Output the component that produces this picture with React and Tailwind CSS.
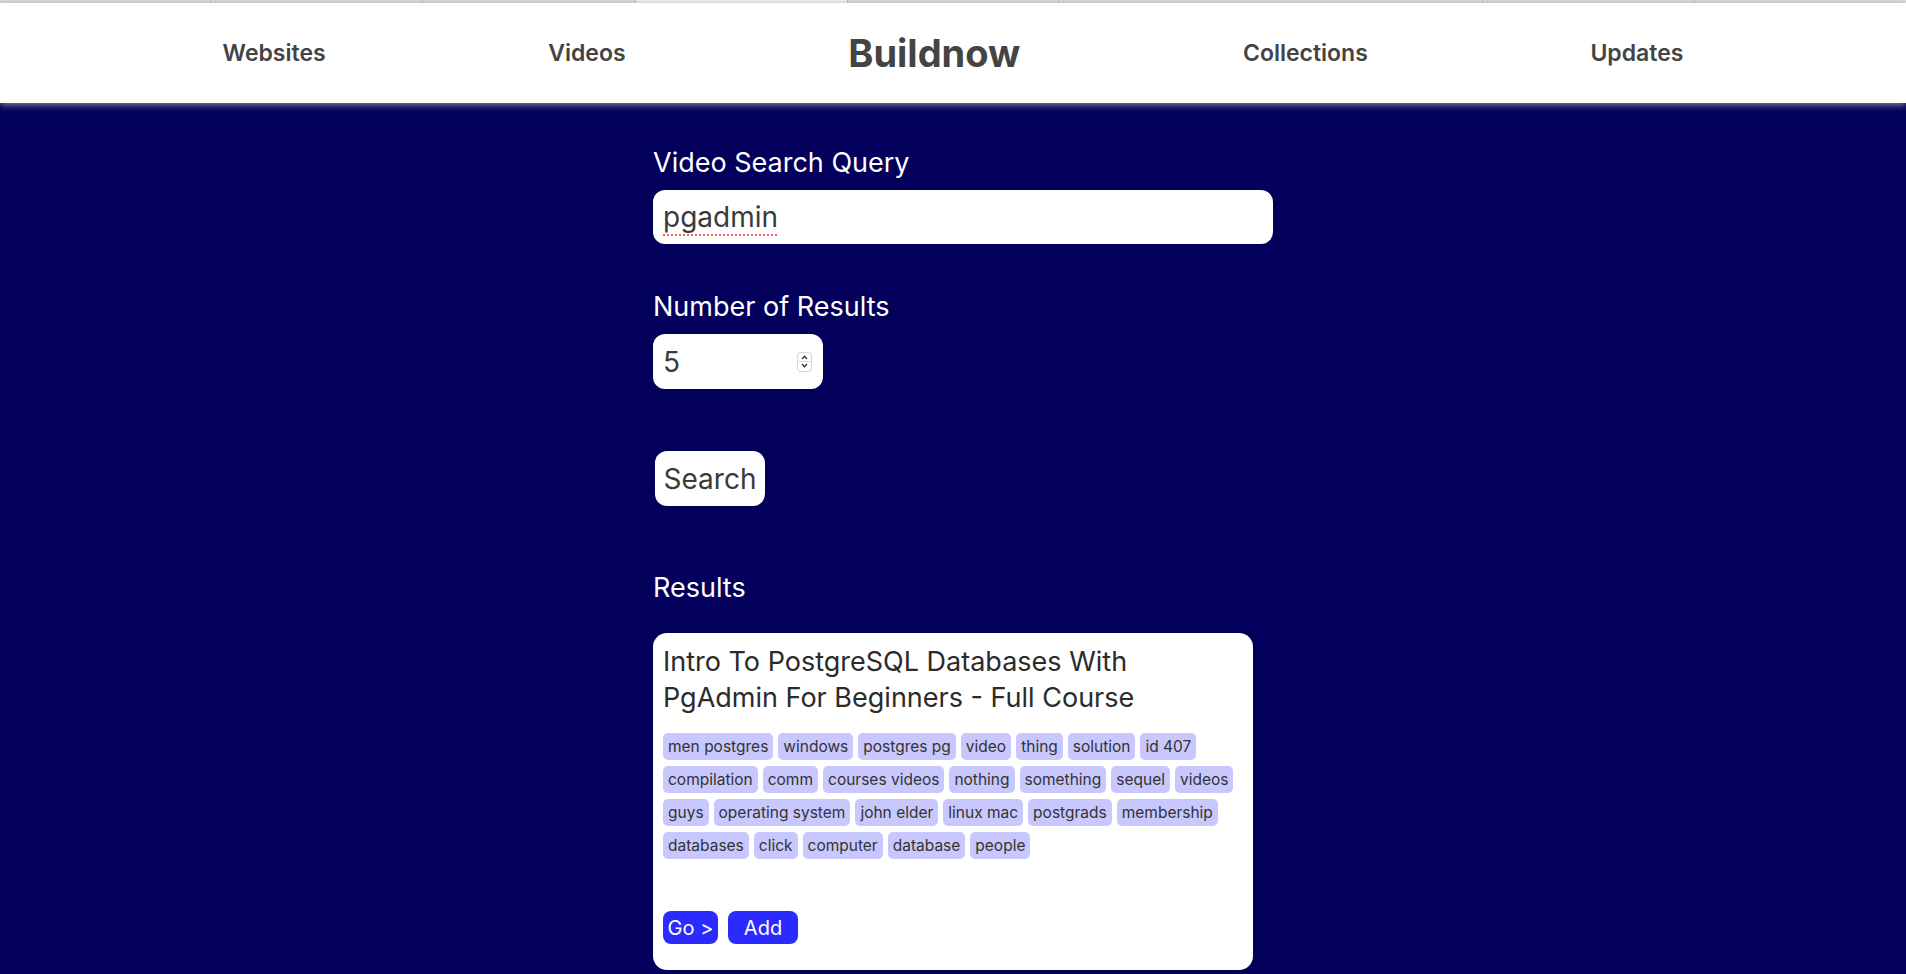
import React from "react";

const tagRows = [
  "men postgres",
  "windows",
  "postgres pg",
  "video",
  "thing",
  "solution",
  "id 407",
  "compilation",
  "comm",
  "courses videos",
  "nothing",
  "something",
  "sequel",
  "videos",
  "guys",
  "operating system",
  "john elder",
  "linux mac",
  "postgrads",
  "membership",
  "databases",
  "click",
  "computer",
  "database",
  "people",
];

function TopStrip() {
  return (
    <div className="flex h-[3px] bg-[#dcdcdc]">
      <div className="w-[211px] border-r border-[#c4c4c4]" />
      <div className="w-[212px] border-r border-[#c4c4c4]" />
      <div className="w-[213px] border-r border-[#c4c4c4]" />
      <div className="w-[212px] border-r border-[#c4c4c4] bg-[#f4f4f4]" />
      <div className="w-[211px] border-r border-[#c4c4c4]" />
      <div className="w-[424px] border-r border-[#c4c4c4]" />
      <div className="w-[212px] border-r border-[#c4c4c4]" />
      <div className="flex-1" />
    </div>
  );
}

function Spinner() {
  return (
    <div className="flex h-[20px] w-[15px] flex-col items-center justify-center rounded-[4px] border border-[#d6d6d6] bg-white">
      <svg width="9" height="7" viewBox="0 0 9 7">
        <path d="M2 5 L4.5 2.3 L7 5" fill="none" stroke="#333" strokeWidth="1.3" />
      </svg>
      <div className="h-px w-full bg-[#dcdcdc]" />
      <svg width="9" height="7" viewBox="0 0 9 7">
        <path d="M2 2 L4.5 4.7 L7 2" fill="none" stroke="#333" strokeWidth="1.3" />
      </svg>
    </div>
  );
}

export default function App() {
  return (
    <div className="min-h-screen bg-[#02005a] font-['Inter','Noto_Sans',sans-serif]">
      <TopStrip />
      <header className="relative z-10 flex h-[100px] items-center justify-evenly bg-white shadow-[0_2px_7px_rgba(140,140,165,0.95)]">
        <a className="text-[23px] font-semibold text-[#444]">Websites</a>
        <a className="text-[23px] font-semibold text-[#444]">Videos</a>
        <span className="text-[38px] font-bold text-[#444]">Buildnow</span>
        <a className="text-[23px] font-semibold text-[#444]">Collections</a>
        <a className="text-[23px] font-semibold text-[#444]">Updates</a>
      </header>

      <main className="mx-auto w-[600px] pt-[44px] pb-[20px]">
        <label className="block text-[27px] leading-[32px] text-white">Video Search Query</label>
        <div className="mt-[11px] flex h-[54px] w-[620px] items-center rounded-[12px] bg-white px-[10px] text-[28px] text-[#3a3a3a]">
          <span className="underline decoration-[#ff5b5b] decoration-dotted decoration-2 underline-offset-[7px]">pgadmin</span>
        </div>

        <label className="mt-[47px] block text-[27px] leading-[32px] text-white">Number of Results</label>
        <div className="mt-[11px] flex h-[55px] w-[170px] items-center justify-between rounded-[12px] bg-white pl-[10px] pr-[11px] text-[28px] text-[#3a3a3a]">
          <span>5</span>
          <Spinner />
        </div>

        <button className="ml-[2px] mt-[62px] flex h-[55px] w-[110px] items-center justify-center rounded-[12px] bg-white text-[28px] text-[#3a3a3a]">
          Search
        </button>

        <h2 className="mt-[66px] text-[27px] leading-[32px] text-white">Results</h2>

        <div className="mt-[29px] rounded-[14px] bg-white px-[10px] pb-[26px] pt-[11px]">
          <h3 className="max-w-[540px] text-[27px] leading-[36px] text-[#2b2b2b]">
            Intro To PostgreSQL Databases With PgAdmin For Beginners - Full Course
          </h3>
          <div className="mt-[17px] flex flex-wrap gap-x-[5px] gap-y-[6px]">
            {tagRows.map((t) => (
              <span key={t} className="rounded-[5px] bg-[#c8c8ff] px-[5px] text-[15.5px] leading-[27px] text-[#333]">
                {t}
              </span>
            ))}
          </div>
          <div className="mt-[52px] flex gap-[10px]">
            <button className="flex h-[33px] w-[55px] items-center justify-center rounded-[8px] bg-[#2b2bff] text-[20px] text-white">
              Go &gt;
            </button>
            <button className="flex h-[33px] w-[70px] items-center justify-center rounded-[8px] bg-[#2b2bff] text-[20px] text-white">
              Add
            </button>
          </div>
        </div>
      </main>
    </div>
  );
}
